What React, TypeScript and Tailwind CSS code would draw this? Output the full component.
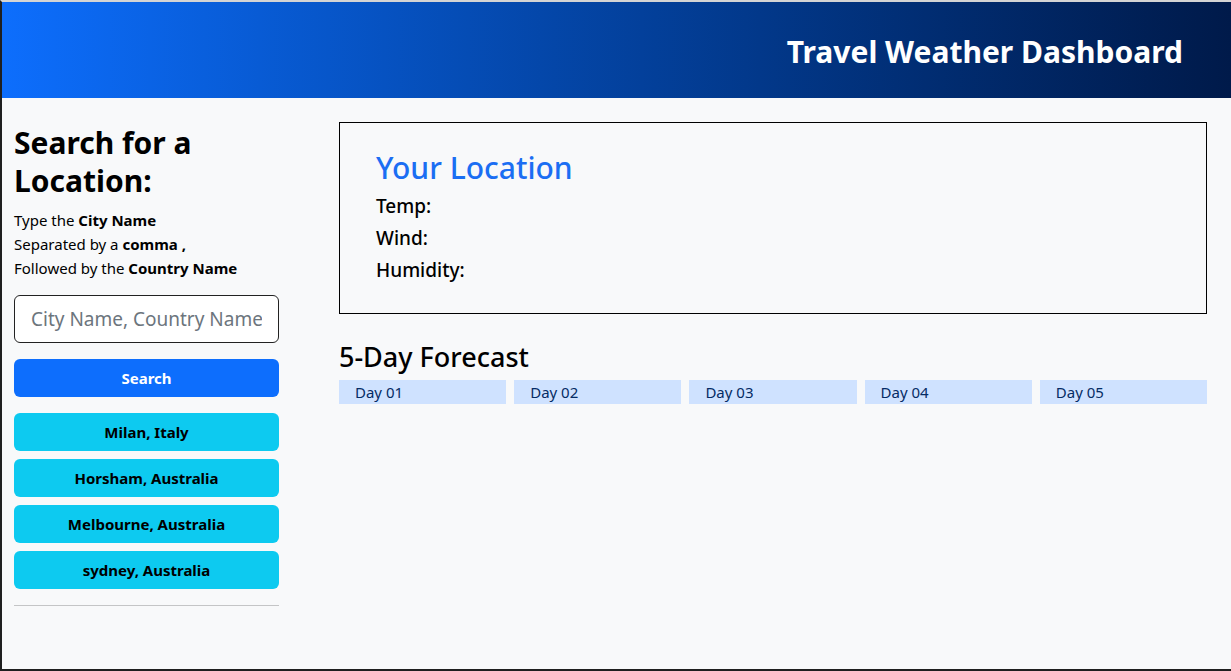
import React from 'react';

const cities = ['Milan, Italy', 'Horsham, Australia', 'Melbourne, Australia', 'sydney, Australia'];
const days = ['Day 01', 'Day 02', 'Day 03', 'Day 04', 'Day 05'];

const App: React.FC = () => {
  return (
    <div
      className="h-[671px] w-[1231px] overflow-hidden border-l-2 border-t-2 border-b-2 border-l-[#1f1f1f] border-b-[#1f1f1f] border-t-[#d4d4d4] bg-[#f8f9fa] text-black"
      style={{ fontFamily: '"Noto Sans", "Open Sans", sans-serif' }}
    >
      <header className="flex h-[96px] items-center justify-end bg-gradient-to-r from-[#0d6efd] to-[#001a4a] pr-[48px] pt-1">
        <h1 className="text-[30px] font-bold leading-none text-white">Travel Weather Dashboard</h1>
      </header>

      <div className="flex pt-6">
        {/* sidebar */}
        <aside className="ml-3 mt-[2px] w-[265px] shrink-0">
          <h2 className="mb-[8px] text-[30px] font-bold leading-[38px]">
            Search for a
            <br />
            Location:
          </h2>
          <div className="text-[15px] leading-6">
            <p>
              Type the <b>City Name</b>
            </p>
            <p>
              Separated by a <b>comma ,</b>
            </p>
            <p>
              Followed by the <b>Country Name</b>
            </p>
          </div>
          <input
            type="text"
            placeholder="City Name, Country Name"
            className="mt-[15px] h-12 w-full rounded-md border border-[#222] bg-white px-4 text-[19px] placeholder:text-[#6c757d] outline-none"
          />
          <button className="mt-4 h-[38px] w-full rounded-md bg-[#0d6efd] text-[15px] font-bold text-white">
            Search
          </button>
          <div className="mt-4 flex flex-col gap-2">
            {cities.map((c) => (
              <button key={c} className="h-[38px] w-full rounded-md bg-[#0dcaf0] text-[15px] font-bold text-black">
                {c}
              </button>
            ))}
          </div>
          <hr className="mt-4 border-t border-[#c4c5c6]" />
        </aside>

        {/* main */}
        <main className="ml-[60px] mr-6 flex-1">
          <section className="h-[192px] border border-black px-9 pt-[26px]">
            <h2 className="mb-[7px] text-[30px] font-medium leading-[38px] text-[#1b6ef3]">Your Location</h2>
            <h5 className="mb-2 text-[19px] font-medium leading-6">Temp:</h5>
            <h5 className="mb-2 text-[19px] font-medium leading-6">Wind:</h5>
            <h5 className="mb-2 text-[19px] font-medium leading-6">Humidity:</h5>
          </section>

          <h3 className="mb-[6px] mt-[26px] text-[27px] font-medium leading-[34px]">5-Day Forecast</h3>
          <div className="grid grid-cols-5 gap-2">
            {days.map((d) => (
              <div key={d} className="h-6 bg-[#cfe2ff] pl-4 text-[15px] leading-6 text-[#052c65]">
                {d}
              </div>
            ))}
          </div>
        </main>
      </div>
    </div>
  );
};

export default App;
